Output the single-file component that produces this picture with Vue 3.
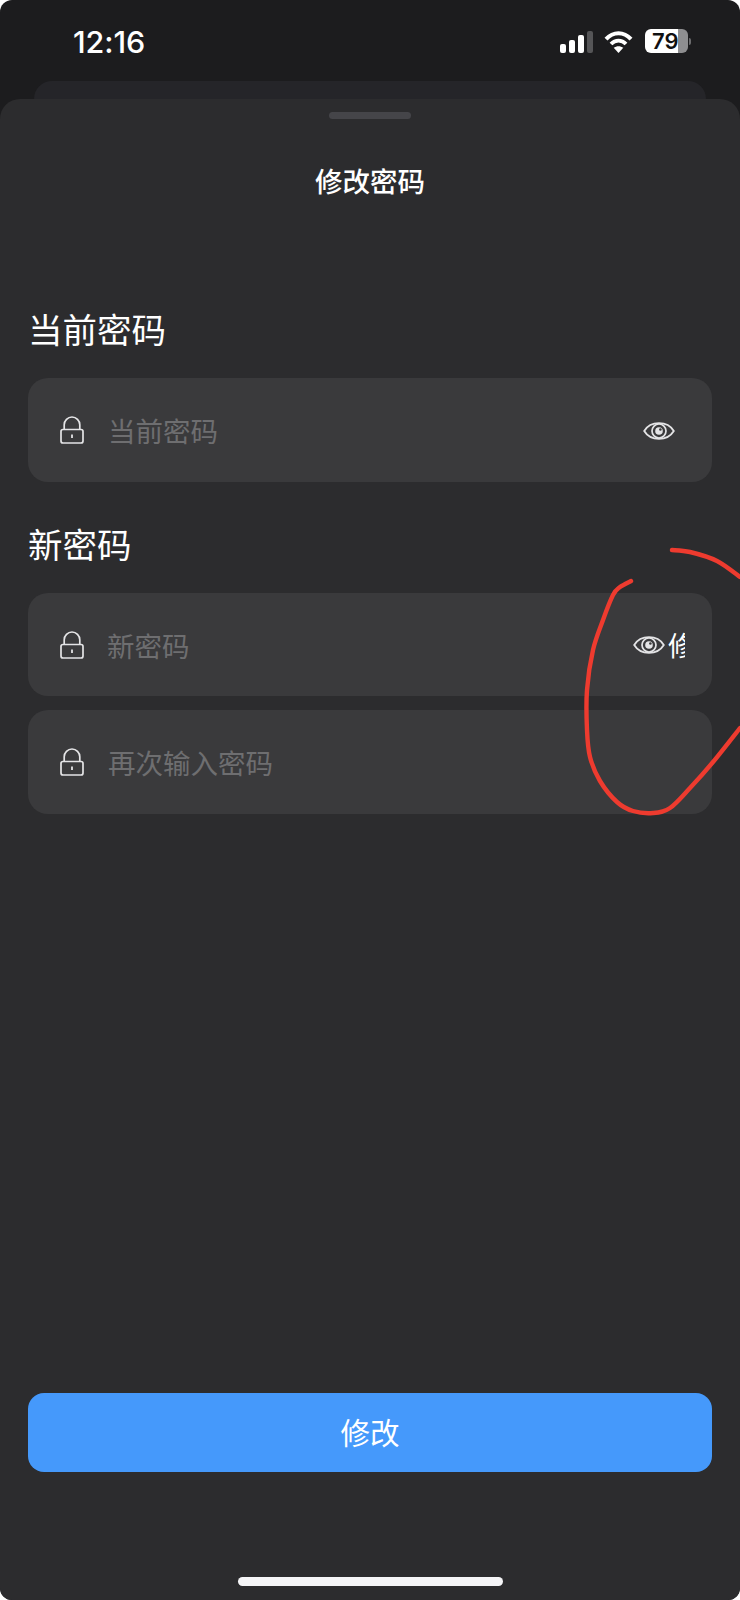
<script setup>
const toPath = (p) => {
  let d = `M${p[0][0]} ${p[0][1]}`
  for (let i = 0; i < p.length - 1; i++) {
    const a = p[Math.max(i - 1, 0)]
    const b = p[i]
    const c = p[i + 1]
    const e = p[Math.min(i + 2, p.length - 1)]
    const c1 = [b[0] + (c[0] - a[0]) / 6, b[1] + (c[1] - a[1]) / 6]
    const c2 = [c[0] - (e[0] - b[0]) / 6, c[1] - (e[1] - b[1]) / 6]
    d += `C${c1[0].toFixed(1)} ${c1[1].toFixed(1)} ${c2[0].toFixed(1)} ${c2[1].toFixed(1)} ${c[0]} ${c[1]}`
  }
  return d
}
const loop = toPath([[631, 581], [620, 587], [613, 595], [603, 620], [593, 650], [587, 690], [587, 730], [590, 757], [600, 781], [617, 802], [633, 811], [653, 813], [670, 808], [690, 788], [713, 762], [740, 728]])
const tail = toPath([[672, 550], [690, 552], [717, 561], [740, 577]])
</script>

<template>
  <div class="phone">
    <header class="status">
      <span class="time">12:16</span>
      <div class="status-icons">
        <div class="signal">
          <i class="bar b1"></i><i class="bar b2"></i><i class="bar b3"></i><i class="bar b4"></i>
        </div>
        <svg class="wifi" width="29" height="22" viewBox="0 0 29 22" fill="none">
          <path d="M2 8.200C9.200 .2 19.800 .2 27 8.200" stroke="#fff" stroke-width="4"/>
          <path d="M7 13c4.300-4.500 10.700-4.500 15 0" stroke="#fff" stroke-width="3.800"/>
          <path d="M14.500 22l-4.800-5.200c2.800-2.200 6.800-2.200 9.600 0z" fill="#fff"/>
        </svg>
        <div class="battery">
          <div class="cell"><span>79</span></div>
          <i class="nub"></i>
        </div>
      </div>
    </header>

    <div class="back-card"></div>

    <section class="sheet">
      <div class="handle"></div>
      <h1 class="title">修改密码</h1>

      <h2 class="label first">当前密码</h2>
      <div class="field">
        <svg class="lock" width="24" height="28" viewBox="0 0 24 28" fill="none">
          <path d="M4.200 13.500V8.800a7.800 7.800 0 0 1 15.600 0v4.700" stroke="#e4e4e6" stroke-width="1.700"/>
          <rect x="1" y="13.500" width="22" height="13.500" rx="2" stroke="#e4e4e6" stroke-width="1.700"/>
          <path d="M12 18.500v3.500" stroke="#e4e4e6" stroke-width="1.800"/>
        </svg>
        <span class="placeholder p1">当前密码</span>
        <svg class="eye" width="32" height="22" viewBox="0 0 32 22" fill="none">
          <path d="M1.200 11C7.500.6 24.500.6 30.800 11 24.500 21.400 7.500 21.400 1.200 11z" stroke="#e4e4e6" stroke-width="1.800"/>
          <circle cx="16" cy="11" r="7" stroke="#e4e4e6" stroke-width="1.700"/>
          <circle cx="16" cy="11" r="3.800" fill="#e4e4e6"/>
          <circle cx="17.400" cy="9.500" r="1.300" fill="#3a3a3c"/>
        </svg>
      </div>

      <h2 class="label second">新密码</h2>
      <div class="field short">
        <svg class="lock" width="24" height="28" viewBox="0 0 24 28" fill="none">
          <path d="M4.200 13.500V8.800a7.800 7.800 0 0 1 15.600 0v4.700" stroke="#e4e4e6" stroke-width="1.700"/>
          <rect x="1" y="13.500" width="22" height="13.500" rx="2" stroke="#e4e4e6" stroke-width="1.700"/>
          <path d="M12 18.500v3.500" stroke="#e4e4e6" stroke-width="1.800"/>
        </svg>
        <span class="placeholder p2">新密码</span>
        <div class="suffix">
          <svg class="eye" width="32" height="22" viewBox="0 0 32 22" fill="none">
            <path d="M1.200 11C7.500.6 24.500.6 30.800 11 24.500 21.400 7.500 21.400 1.200 11z" stroke="#e4e4e6" stroke-width="1.800"/>
            <circle cx="16" cy="11" r="7" stroke="#e4e4e6" stroke-width="1.700"/>
            <circle cx="16" cy="11" r="3.800" fill="#e4e4e6"/>
            <circle cx="17.400" cy="9.500" r="1.300" fill="#3a3a3c"/>
          </svg>
          <span class="clipped">修改</span>
        </div>
      </div>
      <div class="field confirm">
        <svg class="lock" width="24" height="28" viewBox="0 0 24 28" fill="none">
          <path d="M4.200 13.500V8.800a7.800 7.800 0 0 1 15.600 0v4.700" stroke="#e4e4e6" stroke-width="1.700"/>
          <rect x="1" y="13.500" width="22" height="13.500" rx="2" stroke="#e4e4e6" stroke-width="1.700"/>
          <path d="M12 18.500v3.500" stroke="#e4e4e6" stroke-width="1.800"/>
        </svg>
        <span class="placeholder p3">再次输入密码</span>
      </div>

      <button class="submit" type="button">修改</button>
      <div class="home"></div>
    </section>

    <svg class="scribble" width="740" height="1600" viewBox="0 0 740 1600" fill="none">
      <path :d="loop" stroke="#ee3b2f" stroke-width="4.400" stroke-linecap="round" stroke-linejoin="round"/>
      <path :d="tail" stroke="#ee3b2f" stroke-width="4.400" stroke-linecap="round"/>
    </svg>
  </div>
</template>

<style scoped>
.phone {
  position: relative;
  width: 740px;
  height: 1600px;
  display: flex;
  flex-direction: column;
  overflow: hidden;
  border-radius: 12px;
  background: #1c1c1e;
  font-family: "Noto Sans CJK SC", "Liberation Sans", sans-serif;
  color: #fff;
}
.status {
  height: 81px;
  flex: none;
  display: flex;
  justify-content: space-between;
  align-items: flex-start;
  padding: 0 49px 0 73px;
  box-sizing: border-box;
}
.time {
  margin-top: 24px;
  font-family: "Inter", "Liberation Sans", sans-serif;
  font-size: 30.500px;
  line-height: 36px;
  font-weight: 500;
  letter-spacing: -0.1px;
}
.status-icons {
  display: flex;
  align-items: flex-end;
  height: 53px;
}
.signal {
  display: flex;
  align-items: flex-end;
  gap: 3px;
  margin-right: 11px;
}
.bar {
  display: block;
  width: 6px;
  border-radius: 2px;
  background: #fff;
}
.b1 { height: 9px; }
.b2 { height: 13px; }
.b3 { height: 18px; }
.b4 { height: 22px; background: #555557; }
.wifi {
  display: block;
  margin-right: 12px;
}
.battery {
  display: flex;
  align-items: center;
}
.cell {
  width: 43px;
  height: 24px;
  border-radius: 6px;
  background: linear-gradient(90deg, #fff 0, #fff 33px, #8e8e90 33px, #8e8e90 100%);
  color: #111;
  font-family: "Inter", "Liberation Sans", sans-serif;
  font-size: 22px;
  line-height: 24px;
  font-weight: 600;
  padding-left: 7px;
  box-sizing: border-box;
}
.nub {
  display: block;
  width: 2px;
  height: 7px;
  margin-left: 1px;
  border-radius: 0 2px 2px 0;
  background: #6c6c6e;
}
.back-card {
  flex: none;
  height: 30px;
  margin: 0 34px;
  border-radius: 18px 18px 0 0;
  background: #252529;
}
.sheet {
  flex: 1;
  margin-top: -12px;
  position: relative;
  display: flex;
  flex-direction: column;
  padding: 13px 28px 14px;
  border-radius: 20px 20px 0 0;
  background: #2c2c2e;
}
.handle {
  flex: none;
  width: 82px;
  height: 7px;
  align-self: center;
  border-radius: 4px;
  background: #454549;
}
.title {
  margin: 41px 0 0;
  font-size: 27.500px;
  line-height: 40px;
  font-weight: 500;
  text-align: center;
}
.label {
  margin: 0;
  font-size: 34.500px;
  line-height: 48px;
  font-weight: 400;
}
.label.first { margin-top: 104px; margin-bottom: 26px; }
.label.second { margin-top: 37px; margin-bottom: 26px; }
.field {
  flex: none;
  height: 104px;
  display: flex;
  align-items: center;
  padding-left: 32px;
  padding-right: 37px;
  border-radius: 20px;
  background: #3a3a3c;
}
.field.short { height: 103px; }
.field.confirm { margin-top: 14px; }
.lock { flex: none; display: block; }
.placeholder {
  flex: 1;
  font-size: 27.500px;
  line-height: 40px;
  color: #6e6e70;
}
.p1 { margin-left: 24px; }
.p2 { margin-left: 23px; }
.p3 { margin-left: 24px; }
.eye { flex: none; display: block; margin-top: 1px; }
.suffix {
  flex: none;
  display: flex;
  align-items: center;
  gap: 3px;
  margin-right: -10px;
}
.clipped {
  width: 17px;
  overflow: hidden;
  white-space: nowrap;
  font-size: 27px;
  line-height: 40px;
  color: #fff;
}
.submit {
  margin-top: auto;
  flex: none;
  height: 79px;
  border: 0;
  padding: 0 0 4px;
  border-radius: 16px;
  background: #4599fb;
  color: #fff;
  font-family: inherit;
  font-size: 29.500px;
  line-height: 40px;
}
.home {
  flex: none;
  width: 265px;
  height: 9px;
  margin-top: 105px;
  align-self: center;
  border-radius: 5px;
  background: #f5f5f7;
}
.scribble {
  position: absolute;
  left: 0;
  top: 0;
  pointer-events: none;
}
</style>

<style>
html, body { background: #fff; }
</style>
